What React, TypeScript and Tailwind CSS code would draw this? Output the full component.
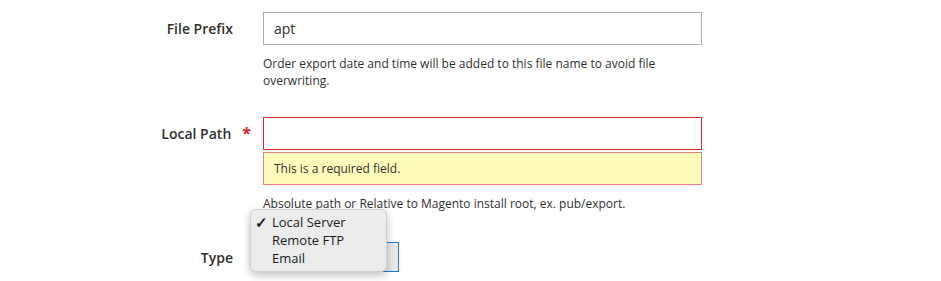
import React from "react";

export default function App() {
  return (
    <div className="relative w-[941px] h-[281px] overflow-hidden bg-white text-[#303030] font-['Open_Sans',sans-serif]">
      {/* Row 1 */}
      <div className="flex pt-[12px]">
        <div className="w-[233px] text-right font-semibold text-[14px] leading-[33px]">File Prefix</div>
        <div className="ml-[30px] w-[439px]">
          <div className="h-[33px] border border-[#adadad] px-[10px] text-[14px] leading-[31px]">apt</div>
          <div className="mt-[10px] text-[12px] leading-[17px]">
            Order export date and time will be added to this file name to avoid file overwriting.
          </div>
        </div>
      </div>
      {/* Row 2 */}
      <div className="flex mt-[28px]">
        <div className="w-[233px] flex justify-end items-start">
          <span className="font-semibold text-[14px] leading-[33px]">Local Path</span>
          <span className="ml-[11px] mr-[-18px] text-[#e22626] font-bold text-[16px] leading-[33px]">*</span>
        </div>
        <div className="ml-[30px] w-[439px]">
          <div className="h-[33px] border border-[#e22626]"></div>
          <div className="mt-[2px] h-[33px] border border-[#ee7f7f] bg-[#fffbbb] px-[10px] text-[12px] leading-[31px]">
            This is a required field.
          </div>
          <div className="mt-[10px] text-[12px] leading-[17px]">
            Absolute path or Relative to Magento install root, ex. pub/export.
          </div>
        </div>
      </div>
      {/* Row 3 */}
      <div className="flex mt-[30px]">
        <div className="w-[233px] text-right font-semibold text-[14px] leading-[31px]">Type</div>
        <div className="ml-[30px]">
          <div className="h-[30px] w-[136px] border border-[#1a7fd6] bg-[#e8e8e8]"></div>
        </div>
      </div>
      {/* Open dropdown menu */}
      <div className="absolute left-[250px] top-[209px] w-[137px] h-[63px] rounded-[6px] bg-[#ececec] border border-[#d0d0d0] shadow-[0_3px_8px_rgba(0,0,0,0.25)] pt-[3px] text-[13px] leading-[18px] text-[#1a1a1a]">
        <div className="flex items-center">
          <span className="w-[21px] pl-[4px] text-[15px] font-bold">✓</span>
          <span>Local Server</span>
        </div>
        <div className="pl-[21px]">Remote FTP</div>
        <div className="pl-[21px]">Email</div>
      </div>
    </div>
  );
}
